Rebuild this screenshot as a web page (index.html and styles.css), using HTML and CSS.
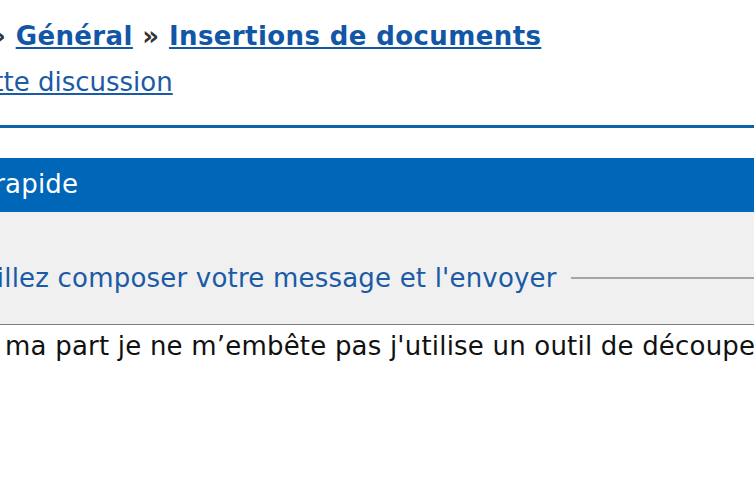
FILE: index.html
```html
<!DOCTYPE html>
<html lang="fr">
<head>
<meta charset="utf-8">
<title>Insertions de documents</title>
<link rel="stylesheet" href="styles.css">
</head>
<body>
<div class="page">
  <div class="crumbs">
    <div class="crumb-line"><span class="sep">»</span> <a href="#" class="crumb">Général</a> <span class="sep">»</span> <a href="#" class="crumb">Insertions de documents</a></div>
    <div class="sub-line"><a href="#" class="sub">cette discussion</a></div>
  </div>
  <div class="rule"></div>
  <div class="box-head">Réponse rapide</div>
  <div class="box-body">
    <div class="legend-row">
      <span class="legend">Veuillez composer votre message et l'envoyer</span>
      <span class="legend-line"></span>
    </div>
    <div class="editor">Pour ma part je ne m’embête pas j'utilise un outil de découpe d'écran intégré</div>
  </div>
</div>
</body>
</html>
```
FILE: styles.css
```css
html, body {
  margin: 0;
  padding: 0;
  background: #ffffff;
  overflow: hidden;
}
.page {
  width: 754px;
  height: 501px;
  overflow: hidden;
  font-family: "DejaVu Sans", Verdana, sans-serif;
  font-size: 26px;
  letter-spacing: 0.2px;
  white-space: nowrap;
}
.crumbs {
  padding-top: 13px;
  line-height: 46px;
}
.crumb-line {
  font-weight: bold;
  color: #333333;
  letter-spacing: 0.4px;
  text-indent: -11px;
}
.crumb {
  color: #1256a6;
  text-decoration: underline;
}
.sub-line {
  letter-spacing: 0;
  text-indent: -37px;
}
.sub {
  color: #1a5aa6;
  text-decoration: underline;
}
.rule {
  margin-top: 20px;
  height: 3px;
  background: #0a63ad;
}
.box-head {
  margin-top: 30px;
  height: 54px;
  box-sizing: border-box;
  padding-top: 11px;
  line-height: 30px;
  background: #0066b8;
  color: #ffffff;
  text-indent: -127px;
}
.box-body {
  background: #f0f0f0;
  padding-top: 51px;
}
.legend-row {
  display: flex;
  align-items: center;
  gap: 14px;
  height: 30px;
}
.legend {
  color: #1a5aa6;
  margin-left: -52px;
}
.legend-line {
  flex: 1;
  height: 2px;
  background: #a6a6a0;
}
.editor {
  margin-top: 31px;
  background: #ffffff;
  border-top: 1px solid #808080;
  padding-top: 6px;
  height: 200px;
  color: #111111;
  text-indent: -62px;
}
```
